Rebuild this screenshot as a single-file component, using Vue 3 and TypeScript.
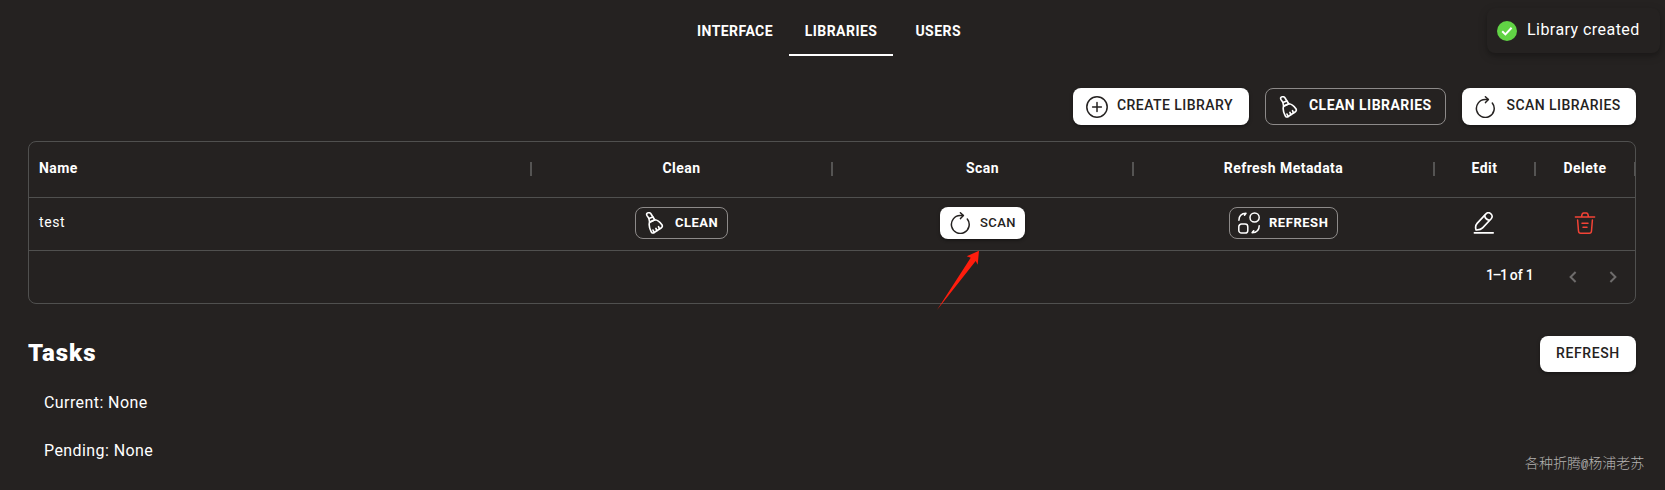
<script setup lang="ts">
import { h, type FunctionalComponent } from 'vue'

type IconName = 'plus' | 'broom' | 'scan' | 'refresh' | 'edit' | 'trash'

const shapes: Record<IconName, string[]> = {
  plus: ['M11 .8a10.2 10.2 0 1 1 0 20.4a10.2 10.2 0 0 1 0-20.4z', 'M11 6.6v8.8M6.6 11h8.8'],
  broom: [
    'M5 6.5 3 3.6C2.2 2 2.8 1 4.2.8 5.7.5 6.7 1 7.2 2.3L8.9 5',
    'M5 6.5l3.9-1.5 1.9 2.7-5.2 2.5z',
    'M5.6 10.2l5.2-2.5c3.2.1 5.2 2.3 7.1 5 .7 1 .5 2.3-.5 3l-7.6 5c-1 .6-2 .3-2.5-.8C6.2 17.6 4.2 14 5.6 10.2z',
    'M10.1 20.4l-1.1-2.3M12.9 18.6l-1-2.2M15.5 16.9l-1-2.2',
  ],
  scan: ['M14.2 3.6H11a8.9 8.9 0 1 0 7.3 3.4', 'M11.4 .8l3 2.8-2.9 3'],
  refresh: [
    'M16.6.9a4.6 4.6 0 1 1 0 9.2a4.6 4.6 0 0 1 0-9.2z',
    'M3.5 12.1h3.6a2.7 2.7 0 0 1 2.7 2.7v3.6a2.7 2.7 0 0 1-2.7 2.7H3.5a2.7 2.7 0 0 1-2.7-2.7v-3.6a2.7 2.7 0 0 1 2.7-2.7z',
    'M.9 8.3C.9 4.2 3.4 1.4 8 1.2L6.5 3.2',
    'M21.2 13.7c0 4.1-2.5 6.9-7.1 7.1l1.6-2.1',
  ],
  edit: [
    'M12.7 2.1C14.2.5 16.3.4 17.9 1.8s1.7 3.3.3 4.9L9.6 15.9c-1.4 1.6-3.8 2.2-6.5 2.1-.8-2.3-.6-4.8 1-6.6z',
    'M11.6 3.5c.4 2.5 2 4.2 4.7 4.8',
    'M1.4 20.9h18.8',
  ],
  trash: [
    'M1.4 5h19.2M7.6 4.7c.2-2.4.7-3.8 2-3.8h2.8c1.3 0 1.8 1.4 2 3.8',
    'M3.6 8l.9 11c.1 1.4.9 2.2 2.2 2.2h8.6c1.3 0 2.1-.8 2.2-2.2l.9-11',
    'M8 11.2h6M9 15.2h4',
  ],
}

const Icon: FunctionalComponent<{ name: IconName }> = (props) =>
  h(
    'svg',
    {
      width: 22,
      height: 22,
      viewBox: '0 0 22 22',
      fill: 'none',
      stroke: 'currentColor',
      'stroke-width': props.name === 'broom' || props.name === 'edit' ? 1.65 : 1.5,
      'stroke-linecap': 'round',
      'stroke-linejoin': 'round',
    },
    shapes[props.name].map((d) => h('path', { d })),
  )
Icon.props = ['name']

const tabs = ['Interface', 'Libraries', 'Users']
const active = 'Libraries'
const columns = ['Name', 'Clean', 'Scan', 'Refresh Metadata', 'Edit', 'Delete']
const rows = [{ name: 'test' }]
const tasks = [
  { label: 'Current', value: 'None' },
  { label: 'Pending', value: 'None' },
]
</script>

<template>
  <div class="page">
    <nav class="tabs">
      <button v-for="t in tabs" :key="t" class="tab" :class="{ active: t === active }">{{ t }}</button>
    </nav>

    <div class="toast">
      <svg width="20" height="20" viewBox="0 0 20 20">
        <circle cx="10" cy="10" r="10" fill="#61d345" />
        <path d="M5.2 10.2l3.2 3.2 6.2-6.6" fill="none" stroke="#fff" stroke-width="2" />
      </svg>
      <span>Library created</span>
    </div>

    <div class="actions">
      <button class="btn solid create"><Icon name="plus" /><span>Create library</span></button>
      <button class="btn outline clean"><Icon name="broom" /><span>Clean libraries</span></button>
      <button class="btn solid scan"><Icon name="scan" /><span>Scan libraries</span></button>
    </div>

    <section class="table">
      <div class="row head">
        <div v-for="c in columns" :key="c" class="cell"><span>{{ c }}</span></div>
      </div>
      <div v-for="r in rows" :key="r.name" class="row body">
        <div class="cell name"><span>{{ r.name }}</span></div>
        <div class="cell"><button class="btn small outline w-clean"><Icon name="broom" /><span>Clean</span></button></div>
        <div class="cell"><button class="btn small solid w-scan"><Icon name="scan" /><span>Scan</span></button></div>
        <div class="cell"><button class="btn small outline w-refresh"><Icon name="refresh" /><span>Refresh</span></button></div>
        <div class="cell edit"><Icon name="edit" /></div>
        <div class="cell danger"><Icon name="trash" /></div>
      </div>
      <div class="footer">
        <span class="range"><span class="tight">1–1</span> of 1</span>
        <svg class="chev" width="8" height="12" viewBox="0 0 8 12"><path d="M6.6 1 1.6 6l5 5" /></svg>
        <svg class="chev" width="8" height="12" viewBox="0 0 8 12"><path d="M1.4 1l5 5-5 5" /></svg>
      </div>
    </section>

    <svg class="pointer" width="44" height="62" viewBox="0 0 44 62">
      <path d="M43 1.7 30.7 7.3 34.7 8.8 1 61 39.7 12 41.7 15.7z" />
    </svg>

    <div class="tasks-head">
      <h2>Tasks</h2>
      <button class="btn solid reload"><span>Refresh</span></button>
    </div>
    <p v-for="t in tasks" :key="t.label" class="task">{{ t.label }}: {{ t.value }}</p>

    <div class="mark">各种折腾<i>@</i>杨浦老苏</div>
  </div>
</template>

<style>
body {
  margin: 0;
  background: #252221;
}
</style>

<style scoped>
.page {
  position: relative;
  box-sizing: border-box;
  width: 1665px;
  height: 490px;
  padding: 0 29px 0 28px;
  overflow: hidden;
  background: #252221;
  color: #fff;
  font: 400 14px/20px Roboto, "Noto Sans", sans-serif;
  letter-spacing: 0.45px;
}
button {
  margin: 0;
  padding: 0;
  border: 0;
  background: none;
  color: inherit;
  font: inherit;
  letter-spacing: inherit;
  text-transform: uppercase;
}
svg {
  flex: none;
  display: block;
}
.tabs {
  display: flex;
  justify-content: center;
  height: 56px;
}
.tab {
  box-sizing: border-box;
  min-width: 90px;
  height: 56px;
  padding: 7px 15.7px 0 16px;
  border-bottom: 2px solid transparent;
  font-weight: 700;
}
.tab.active {
  border-color: #fff;
}
.toast {
  position: absolute;
  top: 8px;
  left: 1487px;
  display: flex;
  align-items: center;
  gap: 10px;
  box-sizing: border-box;
  width: 173px;
  height: 45px;
  padding-left: 10px;
  border-radius: 8px;
  background: #252221;
  box-shadow: 0 3px 10px rgba(0, 0, 0, 0.2), 0 3px 3px rgba(0, 0, 0, 0.1);
  font-size: 16px;
}
.toast span {
  padding-bottom: 2px;
}
.actions {
  display: flex;
  justify-content: flex-end;
  gap: 16px;
  margin-top: 32px;
}
.btn {
  display: flex;
  align-items: center;
  box-sizing: border-box;
  height: 37px;
  padding-left: 13px;
  border-radius: 8px;
  white-space: nowrap;
}
.btn span {
  margin-left: 9px;
  padding-bottom: 3px;
}
.solid {
  background: #fff;
  color: #252221;
  font-weight: 500;
  box-shadow: 0 2px 2px rgba(0, 0, 0, 0.18), 0 1px 4px rgba(0, 0, 0, 0.18);
}
.outline {
  border: 1px solid #8d8a89;
  font-weight: 700;
}
.create {
  width: 176px;
}
.clean {
  width: 181px;
  padding-left: 12px;
}
.scan {
  width: 174px;
  padding-left: 12px;
}
.scan span {
  margin-left: 10.5px;
}
.small {
  height: 32px;
  padding-left: 9px;
  font-size: 13px;
}
.small span {
  margin-left: 9px;
  padding-bottom: 1px;
}
.small.outline {
  padding-left: 8px;
}
.w-clean {
  width: 93px;
}
.w-scan {
  width: 85px;
}
.w-refresh {
  width: 109px;
  letter-spacing: 0.54px;
}
.table {
  box-sizing: border-box;
  width: 1608px;
  height: 163px;
  margin-top: 16px;
  overflow: hidden;
  border: 1px solid #50504f;
  border-radius: 8px;
}
.row {
  display: grid;
  grid-template-columns: 1fr 301px 301px 301px 101px 100px;
  box-sizing: border-box;
  border-bottom: 1px solid #50504f;
}
.head {
  height: 56px;
  font-weight: 700;
}
.body {
  height: 53px;
}
.cell {
  position: relative;
  display: flex;
  align-items: center;
  justify-content: center;
}
.cell:first-child {
  justify-content: flex-start;
  padding-left: 10px;
}
.head .cell span {
  padding-bottom: 3px;
}
.head .cell::after {
  content: "";
  position: absolute;
  top: 20px;
  right: -1px;
  width: 2px;
  height: 14px;
  background: #555453;
}
.body .cell {
  padding-bottom: 2px;
}
.body .name span {
  padding-bottom: 2px;
  letter-spacing: 0.6px;
}
.body .edit {
  padding-right: 1px;
}
.danger {
  color: #f44336;
}
.footer {
  display: flex;
  align-items: center;
  height: 52px;
}
.range {
  margin-left: auto;
  width: 83px;
  padding-bottom: 4px;
  letter-spacing: -0.1px;
  font-weight: 500;
}
.tight {
  letter-spacing: -1.5px;
}
.chev {
  margin-right: 32px;
  fill: none;
  stroke: #6d6b6a;
  stroke-width: 2;
}
.chev:last-child {
  margin-right: 18px;
}
.pointer {
  position: absolute;
  left: 936px;
  top: 249px;
  fill: #ff1d0d;
}
.tasks-head {
  display: flex;
  align-items: center;
  justify-content: space-between;
  height: 36px;
  margin-top: 32px;
}
h2 {
  margin: 0;
  padding-bottom: 2px;
  font-size: 24px;
  line-height: 32px;
  font-weight: 900;
  letter-spacing: 0.95px;
}
.reload {
  width: 96px;
  height: 36px;
  padding-left: 7px;
  letter-spacing: 0.6px;
}
.reload span {
  padding-bottom: 2px;
}
.task {
  margin: 21px 0 0 16px;
  font-size: 16px;
  line-height: 20px;
  padding-bottom: 7px;
  letter-spacing: 0.42px;
}
.mark {
  position: absolute;
  left: 1525px;
  top: 452px;
  color: #b5b3b2;
  font: 300 14px/20px "Noto Sans CJK SC", sans-serif;
  letter-spacing: 0;
  white-space: nowrap;
}
.mark i {
  font: normal 12px/1 "Liberation Mono", monospace;
}
</style>
